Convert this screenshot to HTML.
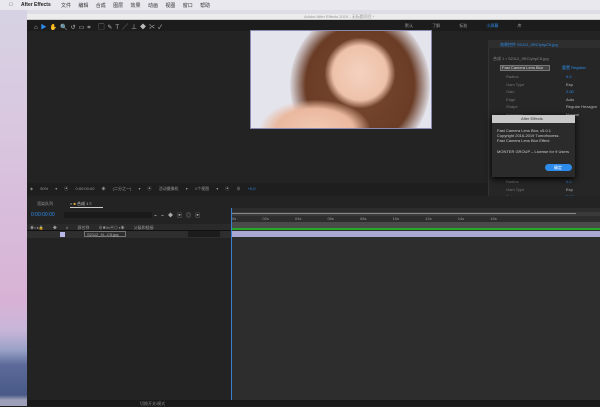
<!DOCTYPE html>
<html><head><meta charset="utf-8"><style>
*{margin:0;padding:0;box-sizing:border-box}
body{width:600px;height:406px;overflow:hidden;position:relative;background:#1f1f1f;font-family:"Liberation Sans","Noto Sans CJK SC",sans-serif;font-size:4px;color:#aaa}
.a{position:absolute}
.t{position:absolute;white-space:nowrap}
</style></head><body>
<div class="a" style="left:0;top:0;width:600px;height:14px;background:#dedde6"></div>
<div class="a" style="left:0;top:0;width:27px;height:406px;background:linear-gradient(#d6d3e4 0,#d9c8e0 120px,#d8b2d6 300px,#c8b6d8 330px,#9aa2c8 350px,#5b6a99 365px,#4a5a88 395px,#9da0b8 400px)"></div>
<div class="a" style="left:0;top:0;width:600px;height:10px;background:#e9e8ee"></div>
<div class="t" style="left:9px;top:2px;font-size:5px;color:#222">&#63743;</div>
<div class="t" style="left:21px;top:2px;font-size:5px;color:#222;font-weight:bold">After Effects</div>
<div class="t" style="left:61px;top:2px;font-size:5px;color:#333;word-spacing:6px">文件 编辑 合成 图层 效果 动画 视图 窗口 帮助</div>
<div class="a" style="left:27px;top:14px;width:573px;height:6px;background:#ececec;border-bottom:1px solid #ccc"></div>
<div class="t" style="left:304px;top:14px;font-size:4px;color:#999">Adobe After Effects 2019 - 无标题项目 *</div>
<div class="a" style="left:27px;top:20px;width:573px;height:11px;background:#1c1c1c"></div>
<div class="t" style="left:34px;top:22px;font-size:6px;color:#bbb;letter-spacing:3px">⌂<span style="color:#2d8ceb">▶</span>✋🔍↺▭⌗ ▢✎T╱⊥◆✂✓</div>
<div class="t" style="left:405px;top:23px;font-size:4px;color:#999;word-spacing:18px">默认 了解 标准 <span style="color:#2d8ceb">小屏幕</span> 库</div>
<div class="a" style="left:27px;top:31px;width:573px;height:152px;background:#232323"></div>
<div class="a" style="left:250px;top:30px;width:182px;height:99px;overflow:hidden;background:#e4e4ec">
 <div class="a" style="left:40px;top:-20px;width:140px;height:150px;border-radius:50%;background:radial-gradient(ellipse,#7a4a30 0,#6a3c26 55%,rgba(106,60,38,0) 72%)"></div>
 <div class="a" style="left:75px;top:8px;width:70px;height:70px;border-radius:50%;background:radial-gradient(ellipse,#f4d2c0 0,#eec2aa 55%,rgba(230,180,150,0) 72%)"></div>
 <div class="a" style="left:10px;top:70px;width:110px;height:60px;border-radius:50%;background:radial-gradient(ellipse,#f2cab4 0,#eab89e 50%,rgba(230,180,150,0) 72%)"></div>
</div>
<div class="a" style="left:250px;top:30px;width:182px;height:99px;border:1px solid #8a8ab0"></div>
<div class="a" style="left:488px;top:40px;width:112px;height:157px;background:#262626;border-left:1px solid #333"></div>
<div class="a" style="left:488px;top:40px;width:112px;height:8px;background:#2e2e2e"></div>
<div class="t" style="left:500px;top:42px;color:#2d8ceb">效果控件 S2112_9RCIyhpC5.jpg</div>
<div class="t" style="left:493px;top:56px;color:#888">合成 1 • S2112_9RCIyhpC5.jpg</div>
<div class="a" style="left:500px;top:65px;width:50px;height:6px;background:#444;border:1px solid #777"></div>
<div class="t" style="left:502px;top:65px;color:#ddd">Fast Camera Lens Blur</div>
<div class="t" style="left:562px;top:65px;color:#2d8ceb">重置 Register</div>
<div class="t" style="left:506px;top:73px;line-height:7.5px;color:#777">Radius<br>Gam Type<br>Gain<br>Edge<br>Shape<br>Accuracy</div>
<div class="t" style="left:566px;top:73px;line-height:7.5px;color:#bbb"><span style="color:#2d8ceb">0.0</span><br>Exp<br><span style="color:#2d8ceb">2.50</span><br>Auto<br>Regular Hexagon<br>Normal</div>
<div class="t" style="left:506px;top:178px;line-height:7.5px;color:#777">Radius<br>Gam Type<br>Gain</div>
<div class="t" style="left:566px;top:178px;line-height:7.5px;color:#bbb"><span style="color:#2d8ceb">0.0</span><br>Exp<br><span style="color:#2d8ceb">2.50</span></div>
<div class="a" style="left:492px;top:115px;width:83px;height:62px;background:#2b2b2b;box-shadow:0 2px 6px #000"></div>
<div class="a" style="left:492px;top:115px;width:83px;height:8px;background:#c9c9c9"></div>
<div class="t" style="left:521px;top:116px;color:#333">After Effects</div>
<div class="t" style="left:497px;top:128px;line-height:5.2px;color:#ccc">Fast Camera Lens Blur, v5.0.1<br>Copyright 2016-2019 Tumofrocess.<br>Fast Camera Lens Blur Effect.<br><br>MONTER GROUP – License for 9 Users</div>
<div class="a" style="left:545px;top:164px;width:27px;height:7px;border-radius:4px;background:#2d8ceb"></div>
<div class="t" style="left:554px;top:165px;color:#fff">确定</div>
<div class="a" style="left:27px;top:183px;width:461px;height:10px;background:#1e1e1e"></div>
<div class="t" style="left:30px;top:186px;color:#999;word-spacing:6px">◈ 50% ▾ ▣ 0:00:00:00 ◉ (二分之一) ▾ ▣ 活动摄像机 ▾ 1个视图 ▾ ▣ ⊕ <span style="color:#2d8ceb">+0.0</span></div>
<div class="a" style="left:27px;top:196px;width:573px;height:210px;background:#232323"></div>
<div class="t" style="left:37px;top:201px;color:#999">渲染队列</div>
<div class="t" style="left:70px;top:201px;color:#ccc">× <span style="color:#e0b040">■</span> 合成 1 ≡</div>
<div class="a" style="left:70px;top:207px;width:33px;height:1px;background:#ccc"></div>
<div class="t" style="left:31px;top:212px;font-size:5px;color:#2d8ceb">0:00:00:00</div>
<div class="a" style="left:64px;top:212px;width:88px;height:6px;background:#1a1a1a"></div>
<div class="t" style="left:154px;top:212px;font-size:5px;color:#aaa;letter-spacing:4px">⌁⌁◆▣◎▣</div>
<div class="a" style="left:27px;top:224px;width:204px;height:7px;background:#2a2a2a;border-bottom:1px solid #111"></div>
<div class="t" style="left:30px;top:225px;color:#999;word-spacing:8px">◉◐●🔒 ◆ # 源名称 ⊕✱\fx▣◎◑◉ 父级和链接</div>
<div class="a" style="left:27px;top:231px;width:204px;height:7px;background:#2e2e2e"></div>
<div class="a" style="left:60px;top:232px;width:5px;height:5px;background:#b8b8e8"></div>
<div class="a" style="left:84px;top:231px;width:42px;height:6px;border:1px solid #777"></div>
<div class="t" style="left:87px;top:232px;color:#bbb">S2112_9l...C5.jpg</div>
<div class="a" style="left:188px;top:231px;width:32px;height:6px;background:#1c1c1c"></div>
<div class="a" style="left:231px;top:208px;width:369px;height:198px;background:#2d2d2d"></div>
<div class="a" style="left:231px;top:212px;width:369px;height:4px;background:#3a3a3a"></div>
<div class="a" style="left:231px;top:213px;width:345px;height:1px;background:#888"></div>
<div class="t" style="left:232px;top:216px;color:#999;word-spacing:25px">0s 02s 04s 06s 08s 10s 12s 14s 16s</div>
<div class="a" style="left:231px;top:222px;width:369px;height:6px;background:#4a4a4a"></div>
<div class="a" style="left:231px;top:228px;width:369px;height:2px;background:#28a828"></div>
<div class="a" style="left:231px;top:231px;width:369px;height:6px;background:#a8a8d0"></div>
<div class="a" style="left:231px;top:208px;width:1px;height:198px;background:#3a80d0"></div>
<div class="a" style="left:27px;top:400px;width:573px;height:6px;background:#1a1a1a"></div>
<div class="t" style="left:140px;top:401px;color:#888">切换开关/模式</div>
</body></html>
